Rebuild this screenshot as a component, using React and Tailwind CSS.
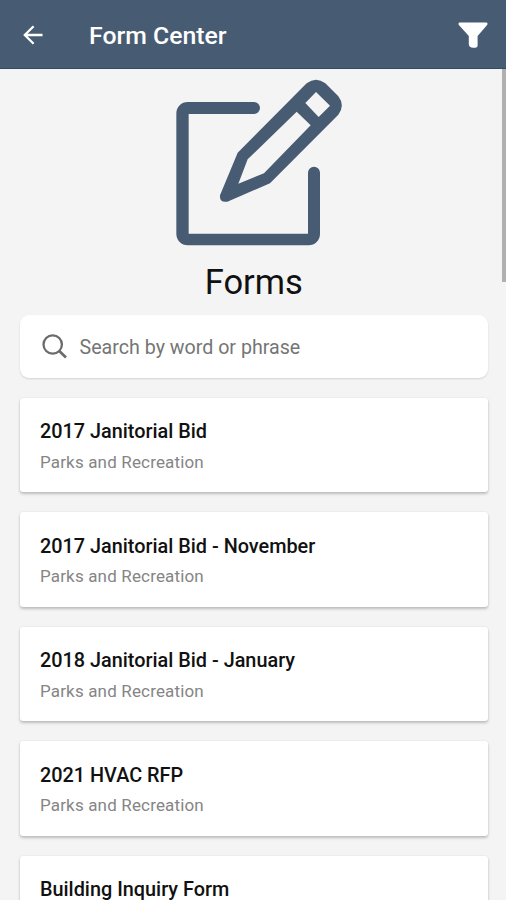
import React from 'react';

const forms = [
  { title: '2017 Janitorial Bid', category: 'Parks and Recreation' },
  { title: '2017 Janitorial Bid - November', category: 'Parks and Recreation' },
  { title: '2018 Janitorial Bid - January', category: 'Parks and Recreation' },
  { title: '2021 HVAC RFP', category: 'Parks and Recreation' },
  { title: 'Building Inquiry Form', category: 'Parks and Recreation' }
];

const BackIcon = () => (
  <svg className="w-5 h-5" viewBox="0 0 20 20" fill="none" stroke="#fff" strokeWidth="2.3">
    <path d="M19.5 10H1.8M10.6 1.200 1.8 10l8.800 8.800" />
  </svg>
);

const FilterIcon = () => (
  <svg className="w-[30px] h-[26px]" viewBox="0 0 30 26" fill="#fff">
    <path d="M1.600.5h26.800c1.200 0 1.500 1.500.7 2.500L19.600 14v9.500c0 1.400-1 2.200-2.200 2.200h-2.200c-2.800 0-4.400-1.500-4.400-3.700v-8L.9 3C.1 2 .5.5 1.600.5z" />
  </svg>
);

const FormsIcon = () => (
  <svg className="w-[190px] h-[190px]" viewBox="0 0 570 570" fill="#475c73">
    <path d="M68 96H267a18 18 0 0 1 0 36H71V491H429V308a18 18 0 0 1 36 0V492a34 34 0 0 1-34 34H68a34 34 0 0 1-34-34V130a34 34 0 0 1 34-34z" />
    <path
      fillRule="evenodd"
      d="M218 248 425 40Q453 18 481 40L520 79Q541 106 520 134L315 340 187 395Q163 399 165 376zM248 268 220 341 297 310 437 166 395 125zM453 66 421 99 461 141 495 107z"
    />
  </svg>
);

const SearchIcon = () => (
  <svg className="w-[25px] h-[25px]" viewBox="0 0 25 25" fill="none" stroke="#6b6b6b" strokeWidth="2.3">
    <circle cx="10.700" cy="10.500" r="9.200" />
    <path d="m17 16.800 7 6.600" strokeWidth="2.700" />
  </svg>
);

const FormCard = ({ title, category }) => (
  <div className="h-[94.5px] shrink-0 rounded-[3px] bg-white px-5 pt-[21.5px] shadow-[0_2px_3px_rgba(0,0,0,0.22),0_0_2px_rgba(0,0,0,0.08)]">
    <h2 className="text-[19.85px] leading-[26px] font-medium text-[#111] whitespace-nowrap">{title}</h2>
    <p className="mt-[4.5px] text-[17px] leading-6 tracking-[0.16px] text-[#858585]">{category}</p>
  </div>
);

export default function App() {
  return (
    <div className="relative flex h-[900px] w-full flex-col overflow-hidden bg-[#f4f4f4] font-['Roboto',sans-serif]">
      <header className="flex h-[69px] shrink-0 items-center border-b border-[#2e4c65] bg-[#475c73] pl-[23px] pr-[18px] pt-px">
        <BackIcon />
        <h1 className="ml-[46px] flex-1 pt-[3px] text-[24.8px] font-medium text-white">Form Center</h1>
        <FilterIcon />
      </header>

      <main className="flex flex-col pl-5 pr-[18.5px] pt-px">
        <div className="flex h-[244.5px] flex-col items-center">
          <div className="ml-[13px]">
            <FormsIcon />
          </div>
          <p className="mt-px text-[34.5px] leading-[42px] text-[#111]">Forms</p>
        </div>

        <div className="flex h-[63px] shrink-0 items-center rounded-[9px] bg-white pl-[22px] shadow-[0_1px_2px_rgba(0,0,0,0.14)]">
          <SearchIcon />
          <span className="ml-[12.5px] pt-[3px] text-[19.65px] text-[#757575]">Search by word or phrase</span>
        </div>

        <div className="mt-5 flex flex-col gap-[20.1px]">
          {forms.map((form) => (
            <FormCard key={form.title} title={form.title} category={form.category} />
          ))}
        </div>
      </main>

      {/* Scroll position indicator */}
      <div className="absolute right-0 top-[69px] h-[213px] w-[4.5px] bg-[#b0b0b0]"></div>
    </div>
  );
}
